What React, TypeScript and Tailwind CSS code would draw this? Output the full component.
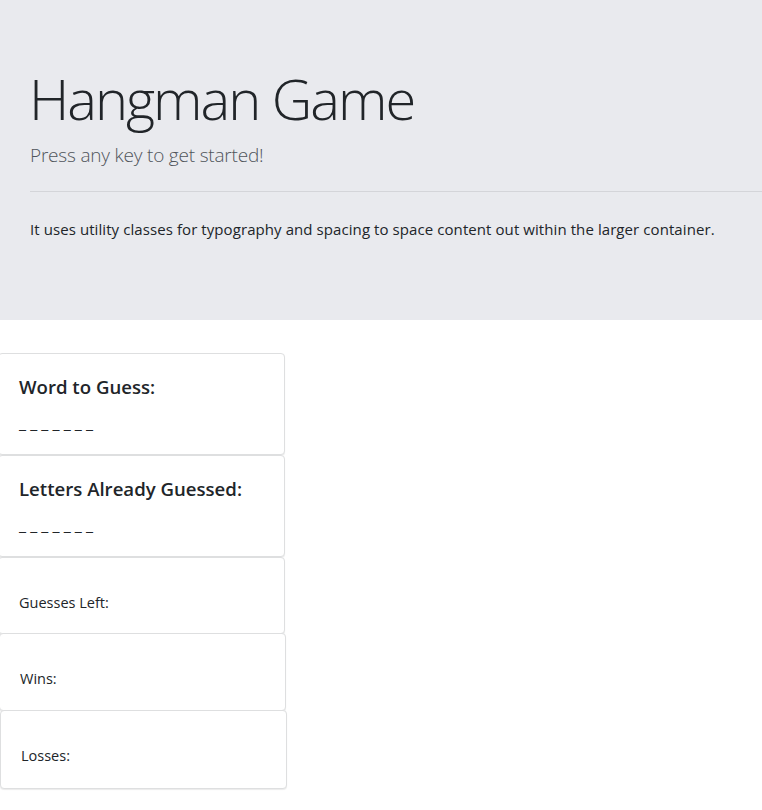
const cardBase =
  "w-[287px] rounded-[4px] border border-[#dedfe0] bg-white shadow-[0_1px_1px_rgba(0,0,0,0.08)]";

export default function App() {
  return (
    <div className="min-h-[810px] w-[762px] overflow-hidden bg-white font-['Open_Sans','Liberation_Sans',sans-serif] text-[#212529]">
      {/* Jumbotron */}
      <header className="h-[320px] bg-[#e9eaee] pl-[30px] pt-[64px]">
        <h1 className="ml-[-1px] text-[56px] font-light leading-[68px] tracking-[-2px]">Hangman Game</h1>
        <p className="mt-[8px] text-[19px] font-light leading-[30px] tracking-[-0.2px] text-[#50555b]">
          Press any key to get started!
        </p>
        <hr className="mt-[21px] border-t border-[#d4d5d9]" />
        <p className="mt-[25px] text-[15px] leading-[24px] tracking-[0.08px]">
          It uses utility classes for typography and spacing to space content out within the larger container.
        </p>
      </header>

      {/* Game cards */}
      <main className="mt-[33px] flex flex-col">
        <section className={`${cardBase} ml-[-2px] h-[102px] px-[20px] pt-[21px]`}>
          <h5 className="text-[18.6px] font-semibold leading-[24px]">Word to Guess:</h5>
          <p className="mt-[12px] text-[16px] leading-[24px]">_ _ _ _ _ _ _</p>
        </section>
        <section className={`${cardBase} ml-[-2px] h-[102px] px-[20px] pt-[21px]`}>
          <h5 className="text-[18.6px] font-semibold leading-[24px]">Letters Already Guessed:</h5>
          <p className="mt-[12px] text-[16px] leading-[24px]">_ _ _ _ _ _ _</p>
        </section>
        <section className={`${cardBase} ml-[-2px] h-[77px] px-[20px] pt-[35px]`}>
          <p className="text-[14.5px] leading-[20px]">Guesses Left:</p>
        </section>
        <section className={`${cardBase} ml-[-1px] mt-[-1px] h-[78px] px-[20px] pt-[35px]`}>
          <p className="text-[14.5px] leading-[20px]">Wins:</p>
        </section>
        <section className={`${cardBase} ml-0 mt-[-1px] h-[79px] px-[20px] pt-[35px]`}>
          <p className="text-[14.5px] leading-[20px]">Losses:</p>
        </section>
      </main>
    </div>
  );
}
